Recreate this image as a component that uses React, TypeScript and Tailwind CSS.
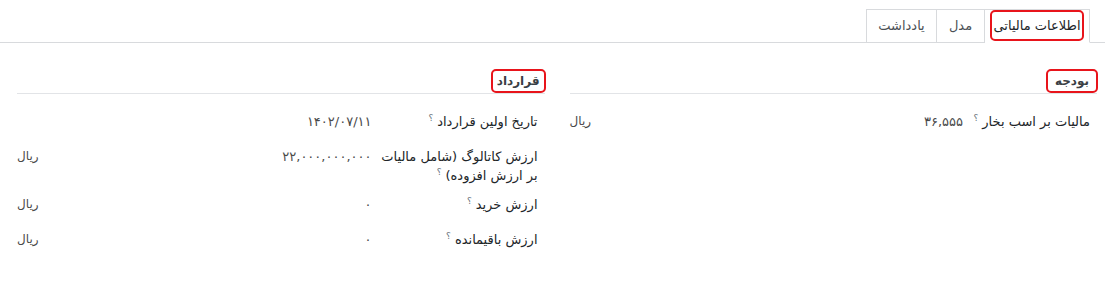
import React from 'react';

const font = { fontFamily: '"DejaVu Sans", "Noto Sans", sans-serif' };

interface FieldRowProps {
  label: React.ReactNode;
  value: string;
  unit?: string;
  labelWidth: string;
}

const Help = () => (
  <span className="relative -top-[5px] mr-[4px] text-[9px] leading-none text-[#6c757d]">؟</span>
);

const FieldRow: React.FC<FieldRowProps> = ({ label, value, unit, labelWidth }) => (
  <div className="flex min-h-[35px]">
    <div className={`${labelWidth} shrink-0 pr-[7px] pt-[8px] pb-[2px] text-[13px] leading-[19px] text-[#212529]`}>
      {label}
    </div>
    <div className="flex flex-1 justify-between pt-[8px] leading-[19px]">
      <span className="text-[13px] text-[#4a4a4a]">{value}</span>
      {unit && <span className="text-[12px] text-[#4a4a4a]">{unit}</span>}
    </div>
  </div>
);

const SectionHeader = ({ title, px }: { title: string; px: string }) => (
  <div className="flex h-[25px] border-b border-[#e2e4e7]">
    <span className={`-mr-[1px] h-[24px] rounded-[5px] border-2 border-[#e8141b] ${px} text-[12px] font-bold leading-[20px] text-[#3b3f45]`}>
      {title}
    </span>
  </div>
);

export default function App() {
  const tabs = [
    { id: 'tax', label: 'اطلاعات مالیاتی', w: 'w-[106px]', active: true },
    { id: 'model', label: 'مدل', w: 'w-[49px]', active: false },
    { id: 'note', label: 'یادداشت', w: 'w-[71px]', active: false },
  ];

  return (
    <div dir="rtl" className="h-[283px] w-[1105px] bg-white" style={font}>
      {/* Tabs */}
      <div className="flex border-b border-[#d8dadd] pt-[9px] pr-[15px]">
        {tabs.map((t) => (
          <div
            key={t.id}
            className={`-mb-px flex h-[34px] items-start justify-center border border-[#d8dadd] bg-white ${t.w} ${
              t.active ? 'border-b-white px-[5px]' : '-mr-px'
            }`}
          >
            {t.active ? (
              <span className="flex h-[31px] w-full items-center justify-center rounded-[5px] border-2 border-[#e8141b] text-[13px] text-[#212529]">
                {t.label}
              </span>
            ) : (
              <span className="flex h-[32px] items-center text-[13px] text-[#4a4f55]">{t.label}</span>
            )}
          </div>
        ))}
      </div>

      {/* Columns */}
      <div className="mt-[26px] grid grid-cols-2 gap-[25px] pr-[8px] pl-[17px]">
        <div>
          <SectionHeader title="بودجه" px="px-[7px]" />
          <div className="mt-[10px]">
            <FieldRow
              labelWidth="w-[134px]"
              label={<>مالیات بر اسب بخار<Help /></>}
              value="۳۶,۵۵۵"
              unit="ریال"
            />
          </div>
        </div>
        <div>
          <SectionHeader title="قرارداد" px="px-[4px]" />
          <div className="mt-[10px]">
            <FieldRow
              labelWidth="w-[173px]"
              label={<>تاریخ اولین قرارداد<Help /></>}
              value="۱۴۰۲/۰۷/۱۱"
            />
            <FieldRow
              labelWidth="w-[173px]"
              label={<>ارزش کاتالوگ (شامل مالیات<br />بر ارزش افزوده)<Help /></>}
              value="۲۲,۰۰۰,۰۰۰,۰۰۰"
              unit="ریال"
            />
            <FieldRow labelWidth="w-[173px]" label={<>ارزش خرید<Help /></>} value="۰" unit="ریال" />
            <FieldRow labelWidth="w-[173px]" label={<>ارزش باقیمانده<Help /></>} value="۰" unit="ریال" />
          </div>
        </div>
      </div>
    </div>
  );
}
